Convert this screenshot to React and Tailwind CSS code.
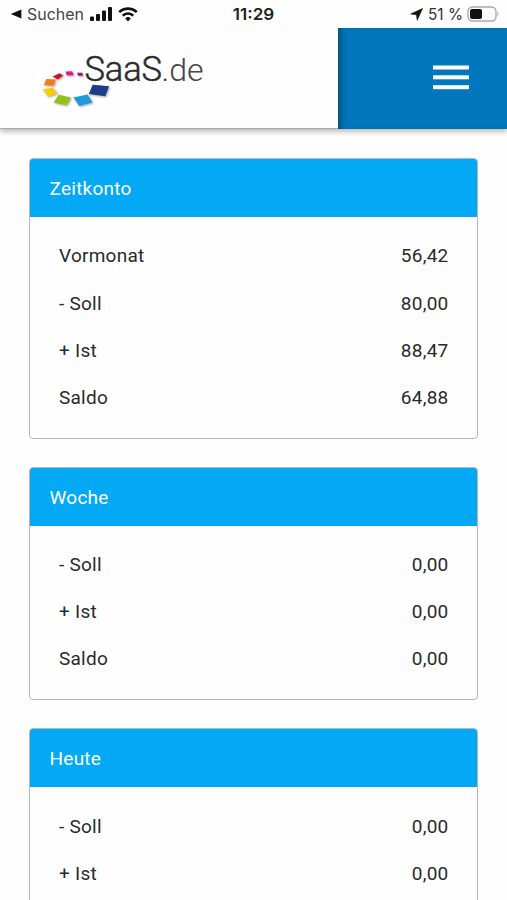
import React from 'react'

const cards = [
  {
    title: 'Zeitkonto',
    rows: [
      ['Vormonat', '56,42'],
      ['- Soll', '80,00'],
      ['+ Ist', '88,47'],
      ['Saldo', '64,88'],
    ],
  },
  {
    title: 'Woche',
    rows: [
      ['- Soll', '0,00'],
      ['+ Ist', '0,00'],
      ['Saldo', '0,00'],
    ],
  },
  {
    title: 'Heute',
    rows: [
      ['- Soll', '0,00'],
      ['+ Ist', '0,00'],
    ],
  },
]

function StatusBar() {
  return (
    <div className="h-7 shrink-0 grid grid-cols-[1fr_auto_1fr] items-center pl-[10px] pr-[7px] font-['Inter',sans-serif] text-[#222]">
      <div className="flex items-center">
        <svg className="w-[12px] h-[10px]" viewBox="0 0 12 10" fill="#111"><path d="M.8 5 11.4.5v9z" /></svg>
        <svg className="w-[59px] h-6 ml-[5px]" viewBox="0 0 59 24" fill="#444">
          <text x="0" y="18.2" fontSize="16" textLength="57" lengthAdjust="spacingAndGlyphs">Suchen</text>
        </svg>
        <svg className="w-[24px] h-4 ml-[3px]" viewBox="0 0 24 16" fill="#111">
          <rect x="1" y="10.5" width="4" height="4.5" rx="1" />
          <rect x="7" y="8" width="4" height="7" rx="1" />
          <rect x="13" y="4.5" width="4" height="10.5" rx="1" />
          <rect x="19" y="1" width="4" height="14" rx="1" />
        </svg>
        <svg className="w-5 h-4 ml-[5px]" viewBox="0 0 20 16" fill="none" stroke="#111" strokeWidth="2.6">
          <path d="M1.2 6.2a12.5 12.5 0 0 1 17.6 0" />
          <path d="M4.7 9.7a7.5 7.5 0 0 1 10.6 0" />
          <path d="M10 15.4 7.2 12.4a4 4 0 0 1 5.6 0z" fill="#111" stroke="none" />
        </svg>
      </div>
      <svg className="w-[46px] h-6" viewBox="0 0 46 24" fill="#222">
        <text x="0.8" y="18.3" fontSize="16" fontWeight="600" textLength="41.5" lengthAdjust="spacingAndGlyphs">11:29</text>
      </svg>
      <div className="flex items-center justify-end">
        <svg className="w-[13px] h-[13px] mt-px" viewBox="0 0 13 13" fill="#111" stroke="#111" strokeWidth="0.6"><path d="M12.5.5 7.2 12.3 6.5 6.8.7 6z" /></svg>
        <svg className="w-[36px] h-6 ml-[5px]" viewBox="0 0 36 24" fill="#333">
          <text x="0" y="18.4" fontSize="16" textLength="35" lengthAdjust="spacingAndGlyphs">51 %</text>
        </svg>
        <svg className="w-[33px] h-4 ml-[3px]" viewBox="0 0 33 16">
          <rect x="1" y="1" width="28" height="14" rx="4.5" fill="none" stroke="#aaa" strokeWidth="1.4" />
          <rect x="3" y="3" width="12" height="10" rx="2" fill="#111" />
          <path d="M30.5 5.5q2 2.5 0 5z" fill="#aaa" />
        </svg>
      </div>
    </div>
  )
}

function Logo() {
  return (
    <svg className="w-[170px] h-[76px]" viewBox="40 36 170 76">
      <g className="drop-shadow-[1px_1px_1px_rgba(0,0,0,0.35)]">
        <path fill="#9d1a65" d="M77 72.8h5.3l.7 2.9h-4.8z" />
        <path fill="#e6168b" d="M65.6 71.6 72.2 71.2l1.6 4-7 .3z" />
        <path fill="#c9142d" d="M52.7 76.5l6.7-3.3 4 2.3-5.7 4.1z" />
        <path fill="#f07e1c" d="M46.4 79l9.3.6-1.9 6.2-10-.9z" />
        <path fill="#fccb00" d="M42.9 89.2l9.6-1.4 4.9 5.5-9.5 3.2z" />
        <path fill="#95c11f" d="M58.6 94.8l12.3 2.8-4.2 7.6-13.1-2.8z" />
        <path fill="#1d9ad9" d="M73.6 97.6l14-3 4.9 8-13.3 3.4z" />
        <path fill="#1f3b8c" d="M92.6 84.7l16.5 1.5-3.8 10.1-16.5-2.4z" />
      </g>
      <text x="84.5" y="80.6" fontSize="34.5" fontWeight="300" fontFamily="Roboto, sans-serif" fill="#2b2b2b" stroke="#2b2b2b" strokeWidth="0.5" textLength="77.5">SaaS</text>
      <text x="161.5" y="80.6" fontSize="32" fontWeight="300" fontFamily="Roboto, sans-serif" fill="#444" textLength="42">.de</text>
    </svg>
  )
}

function Header() {
  return (
    <header className="flex h-[101px] shrink-0 shadow-[0_3px_5px_rgba(0,0,0,0.25)]">
      <div className="w-[338px] pl-10 pt-2 bg-[#fefefe] border-b border-[#aaa]">
        <Logo />
      </div>
      <button aria-label="Menu" className="flex-1 flex items-center justify-end pr-[38px] pb-[2px] bg-[#0277bd] shadow-[inset_7px_0_7px_-4px_rgba(0,0,0,0.35)]">
        <svg className="w-9 h-[25px]" viewBox="0 0 36 25" fill="#fff">
          <rect y="0.5" width="36" height="4" />
          <rect y="10.3" width="36" height="4" />
          <rect y="20.2" width="36" height="4" />
        </svg>
      </button>
    </header>
  )
}

function Card({ title, rows }) {
  return (
    <section className="shrink-0 border border-[#b8b8b8] rounded-[4px] overflow-hidden bg-[#fefefe]">
      <h2 className="h-[58px] flex items-center pl-[19.5px] pt-[2px] bg-[#03a9f4] text-white">{title}</h2>
      <div className="pl-[29px] pr-[28.5px] py-4">
        {rows.map(([label, value]) => (
          <div key={label} className="h-[47.2px] flex items-center justify-between">
            <span>{label}</span>
            <span>{value}</span>
          </div>
        ))}
      </div>
    </section>
  )
}

export default function App() {
  return (
    <div className="h-screen flex flex-col overflow-hidden bg-[#fefefe]">
      <StatusBar />
      <Header />
      <main className="flex-1 min-h-0 overflow-hidden flex flex-col gap-[28px] px-[29px] pt-[29px] font-['Roboto',sans-serif] text-[19px] tracking-[0.25px] text-[#2a2a2a]">
        {cards.map((card) => (
          <Card key={card.title} {...card} />
        ))}
      </main>
    </div>
  )
}
